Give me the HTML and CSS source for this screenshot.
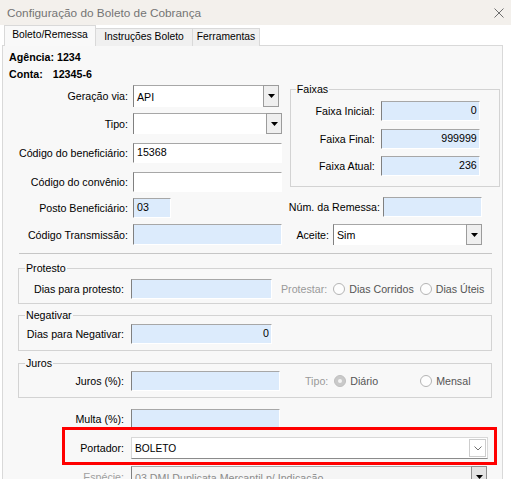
FILE: index.html
```html
<!DOCTYPE html>
<html lang="pt-BR">
<head>
<meta charset="utf-8">
<title>Configuração do Boleto de Cobrança</title>
<link rel="stylesheet" href="styles.css">
</head>
<body>
<div class="window">
  <div class="titlebar">
    <span class="title">Configuração do Boleto de Cobrança</span>
    <svg class="close" width="10" height="10" viewBox="0 0 10 10"><path d="M0.5 0.5L9.5 9.5M9.5 0.5L0.5 9.5" stroke="#6f6f6f" stroke-width="1" fill="none"/></svg>
  </div>
  <div class="tabs">
    <div class="tab active">Boleto/Remessa</div>
    <div class="tab t2">Instruções Boleto</div>
    <div class="tab t3">Ferramentas</div>
  </div>
  <div class="panel">
    <div class="top">
      <div class="leftcol">
        <div class="account">
          <div>Agência: 1234</div>
          <div>Conta:<span class="acc">12345-6</span></div>
        </div>
        <div class="row row-geracao"><label>Geração via:</label><div class="combo w146"><span class="val">API</span><span class="btn"><svg width="7" height="4" viewBox="0 0 7 4"><path d="M0 0H7L3.5 4Z" fill="#000"/></svg></span></div></div>
        <div class="row row-tipo"><label>Tipo:</label><div class="combo w149"><span class="val"></span><span class="btn"><svg width="7" height="4" viewBox="0 0 7 4"><path d="M0 0H7L3.5 4Z" fill="#000"/></svg></span></div></div>
        <div class="row row-benef"><label>Código do beneficiário:</label><div class="field w149">15368</div></div>
        <div class="row row-conv"><label>Código do convênio:</label><div class="field w149"></div></div>
        <div class="row row-posto"><label>Posto Beneficiário:</label><div class="field blue w38">03</div></div>
        <div class="row row-trans"><label>Código Transmissão:</label><div class="field blue w149"></div></div>
      </div>
      <div class="rightcol">
        <fieldset class="faixas">
          <legend>Faixas</legend>
          <div class="frow"><label>Faixa Inicial:</label><div class="field blue num w99">0</div></div>
          <div class="frow f2"><label>Faixa Final:</label><div class="field blue num w99">999999</div></div>
          <div class="frow f3"><label>Faixa Atual:</label><div class="field blue num w99">236</div></div>
        </fieldset>
        <div class="rrow remessa"><label>Núm. da Remessa:</label><div class="field blue w99"></div></div>
        <div class="rrow aceite"><label>Aceite:</label><div class="combo w149"><span class="val">Sim</span><span class="btn"><svg width="7" height="4" viewBox="0 0 7 4"><path d="M0 0H7L3.5 4Z" fill="#000"/></svg></span></div></div>
      </div>
    </div>
    <div class="sep"></div>
    <fieldset class="grp protesto">
      <legend>Protesto</legend>
      <div class="grow">
        <label>Dias para protesto:</label><div class="field blue w141"></div>
        <span class="dim prot">Protestar:</span>
        <span class="radio r-a"></span><span class="rlabel">Dias Corridos</span>
        <span class="radio r-b"></span><span class="rlabel">Dias Úteis</span>
      </div>
    </fieldset>
    <fieldset class="grp negativar">
      <legend>Negativar</legend>
      <div class="grow"><label>Dias para Negativar:</label><div class="field blue num w141">0</div></div>
    </fieldset>
    <fieldset class="grp juros">
      <legend>Juros</legend>
      <div class="grow">
        <label>Juros (%):</label><div class="field blue w149"></div>
        <span class="dim tipo">Tipo:</span>
        <span class="radio on r-a"><span class="dot"></span></span><span class="rlabel">Diário</span>
        <span class="radio r-m"></span><span class="rlabel">Mensal</span>
      </div>
    </fieldset>
    <div class="brow multa"><label>Multa (%):</label><div class="field blue w149"></div></div>
    <div class="brow portador"><label>Portador:</label><div class="mcombo"><span class="mval">BOLETO</span><span class="chev"><svg width="8" height="5" viewBox="0 0 8 5"><path d="M0.5 0.5L4 4L7.5 0.5" stroke="#707070" stroke-width="1" fill="none"/></svg></span></div></div>
    <div class="brow especie"><label class="dimlabel">Espécie:</label><div class="combo dis w356"><span class="val">03 DMI Duplicata Mercantil p/ Indicação</span><span class="btn"><svg width="7" height="4" viewBox="0 0 7 4"><path d="M0 0H7L3.5 4Z" fill="#000"/></svg></span></div></div>
  </div>
  <div class="redbox"></div>
</div>
</body>
</html>
```
FILE: styles.css
```css
* { box-sizing: border-box; }
html, body { margin: 0; padding: 0; }
body {
  width: 511px;
  height: 479px;
  overflow: hidden;
  background: #fff;
  font-family: "Liberation Sans", Arial, sans-serif;
  font-size: 8pt;
  color: #000;
}
.window { position: relative; width: 511px; height: 479px; overflow: hidden; }

.titlebar {
  height: 25px;
  background: #f3f0ec;
  display: flex;
  align-items: center;
  justify-content: space-between;
  padding: 0 7px 0 7px;
}
.title { font-size: 11.8px; color: #747474; }
.close { display: block; }

.tabs {
  display: flex;
  align-items: flex-end;
  height: 21px;
  padding-left: 4px;
}
.tab {
  border: 1px solid #d9d9d9;
  border-bottom: none;
  font-size: 10.3px;
  text-align: center;
  white-space: nowrap;
}
.tab.active {
  position: relative;
  z-index: 1;
  width: 92px;
  height: 21px;
  padding-top: 1px;
  line-height: 16px;
  background: #f9f9f9;
}
.tab.t2, .tab.t3 {
  height: 18px;
  line-height: 15px;
  background: #f0f0f0;
  border-left: none;
}
.tab.t2 { width: 97px; }
.tab.t3 { width: 67px; }

.panel {
  margin: -1px 8px 0 2px;
  height: 445px;
  border: 1px solid #d9d9d9;
  background: #f8f8f8;
}

.top { display: flex; }
.leftcol { width: 288px; }
.account {
  padding: 3px 0 0 6px;
  font-weight: bold;
  line-height: 17px;
}
.acc { margin-left: 10px; }

.row { display: flex; align-items: center; }
.row label {
  width: 125px;
  margin-right: 5px;
  text-align: right;
  white-space: nowrap;
}
.row-geracao { margin-top: 2px; height: 22px; }
.row-tipo { margin-top: 6px; height: 21px; }
.row-benef { margin-top: 9px; height: 20px; }
.row-conv { margin-top: 9px; height: 20px; }
.row-posto { margin-top: 6px; height: 20px; }
.row-trans { margin-top: 6px; height: 21px; }

.field {
  height: 100%;
  display: flex;
  align-items: center;
  padding: 0 3px 2px 3px;
  background: #fff;
  border-style: solid;
  border-width: 1px;
  border-color: #a7a7a7 #ffffff #ffffff #808080;
  white-space: nowrap;
}
.blue { background: #dcebfc; }
.num { justify-content: flex-end; padding-right: 2px; }

.w38 { width: 38px; }
.w99 { width: 99px; }
.w141 { width: 141px; }
.w146 { width: 146px; }
.w149 { width: 149px; }
.w356 { width: 356px; }

.combo {
  height: 100%;
  display: flex;
  background: #fff;
  border-style: solid;
  border-width: 1px 0 0 1px;
  border-color: #a7a7a7 #fff #fff #808080;
}
.combo .val {
  flex: 1;
  display: flex;
  align-items: center;
  padding-left: 3px;
  white-space: nowrap;
  overflow: hidden;
}
.combo .btn {
  width: 16px;
  margin-top: -1px;
  border: 1px solid #9c9c9c;
  background: #efefef;
  display: flex;
  align-items: center;
  justify-content: center;
}
.combo .btn svg { display: block; }

.rightcol { flex: 1; }
.faixas {
  margin: 37px 0 0 1px;
  width: 210px;
  padding: 6px 0 10px 0;
  border: 1px solid #d3d3d3;
  min-width: 0;
}
legend {
  padding: 0 1px;
  margin-left: 5px;
  line-height: 12px;
}
.frow { display: flex; align-items: center; height: 20px; }
.frow label {
  width: 84px;
  margin-right: 6px;
  text-align: right;
  white-space: nowrap;
}
.frow.f2 { margin-top: 8px; }
.frow.f3 { margin-top: 7px; }

.rrow {
  display: flex;
  align-items: center;
  justify-content: flex-end;
  padding-right: 20px;
}
.rrow label { white-space: nowrap; }
.remessa { margin-top: 10px; height: 20px; }
.remessa label { margin-right: 3px; }
.aceite { margin-top: 7px; height: 21px; }
.aceite label { margin-right: 4px; }

.sep {
  height: 1px;
  background: #c6c6c6;
  margin: 8px 10px 0 16px;
}

.grp {
  margin: 8px 10px 0 15px;
  border: 1px solid #d3d3d3;
  min-width: 0;
}
.grp legend { margin-left: 6px; }
.protesto { padding: 5px 0 4px 0; }
.negativar { margin-top: 5px; padding: 3px 0 6px 0; }
.juros { margin-top: 6px; padding: 2px 0 6px 0; }

.grow { display: flex; align-items: center; height: 20px; }
.grow label, .brow label {
  width: 105px;
  margin-right: 7px;
  text-align: right;
  white-space: nowrap;
  flex: none;
}
.dim { color: #9a9a9a; white-space: nowrap; }
.prot { margin-left: 9px; margin-right: 6px; }
.tipo { margin-left: 25px; margin-right: 6px; }

.radio {
  width: 12px;
  height: 12px;
  flex: none;
  border-radius: 50%;
  border: 1px solid #b4b4b4;
  background: #fdfdfd;
  margin-right: 4px;
  display: flex;
  align-items: center;
  justify-content: center;
}
.radio.on { background: #c9c9c9; border-color: #bfbfbf; }
.radio .dot { width: 4px; height: 4px; border-radius: 50%; background: #f4f4f4; }
.r-b { margin-left: 6px; }
.r-m { margin-left: 42px; }
.rlabel { color: #555; white-space: nowrap; }

.brow {
  display: flex;
  align-items: center;
  padding-left: 16px;
}
.multa { margin-top: 11px; height: 20px; }
.portador { margin-top: 8px; height: 22px; }
.especie { margin-top: 7px; height: 22px; }

.mcombo {
  width: 357px;
  height: 100%;
  display: flex;
  align-items: center;
  background: #fff;
  border: 1px solid #d8d8d8;
  border-bottom-color: #8b8b8b;
}
.mval { flex: 1; padding-left: 3px; font-size: 10.2px; }
.chev {
  width: 17px;
  height: 18px;
  border: 1px solid #cdcdcd;
  display: flex;
  align-items: center;
  justify-content: center;
  margin-right: 1px;
}
.chev svg { display: block; }

.dimlabel { color: #a0a0a0; }
.combo.dis { background: #f5f5f5; color: #8c8c8c; }
.combo.dis .btn { background: #e4e4e4; border-color: #8f8f8f; }

.redbox {
  position: absolute;
  left: 62px;
  top: 427px;
  width: 435px;
  height: 38px;
  border: 3px solid #ff0000;
}
```
